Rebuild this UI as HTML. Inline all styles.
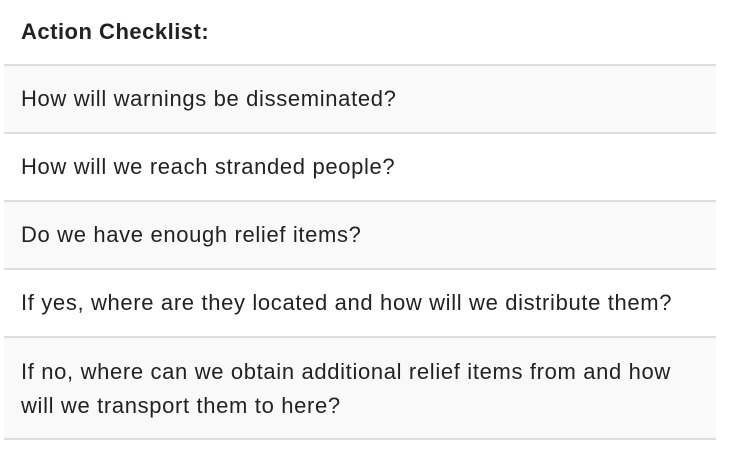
<!DOCTYPE html>
<html><head><style>
body{margin:0;background:#fff;font-family:"Liberation Sans",Arial,sans-serif;color:#222;}
.t{position:absolute;left:4px;width:712px;top:0;}
.h{font-weight:bold;font-size:22px;letter-spacing:0.5px;line-height:63px;padding-left:17px;border-bottom:2px solid #ddd;box-sizing:border-box;height:66px;}
.r{box-sizing:border-box;height:68px;border-bottom:2px solid #ddd;font-size:22px;letter-spacing:0.65px;padding-left:17px;line-height:66px;}
.g{background:#f9f9f9;}
.l{height:102px;line-height:34px;padding-top:17px;}
</style></head><body>
<div class="t">
<div class="h">Action Checklist:</div>
<div class="r g">How will warnings be disseminated?</div>
<div class="r">How will we reach stranded people?</div>
<div class="r g">Do we have enough relief items?</div>
<div class="r">If yes, where are they located and how will we distribute them?</div>
<div class="r g l">If no, where can we obtain additional relief items from and how<br>will we transport them to here?</div>
</div>
</body></html>
